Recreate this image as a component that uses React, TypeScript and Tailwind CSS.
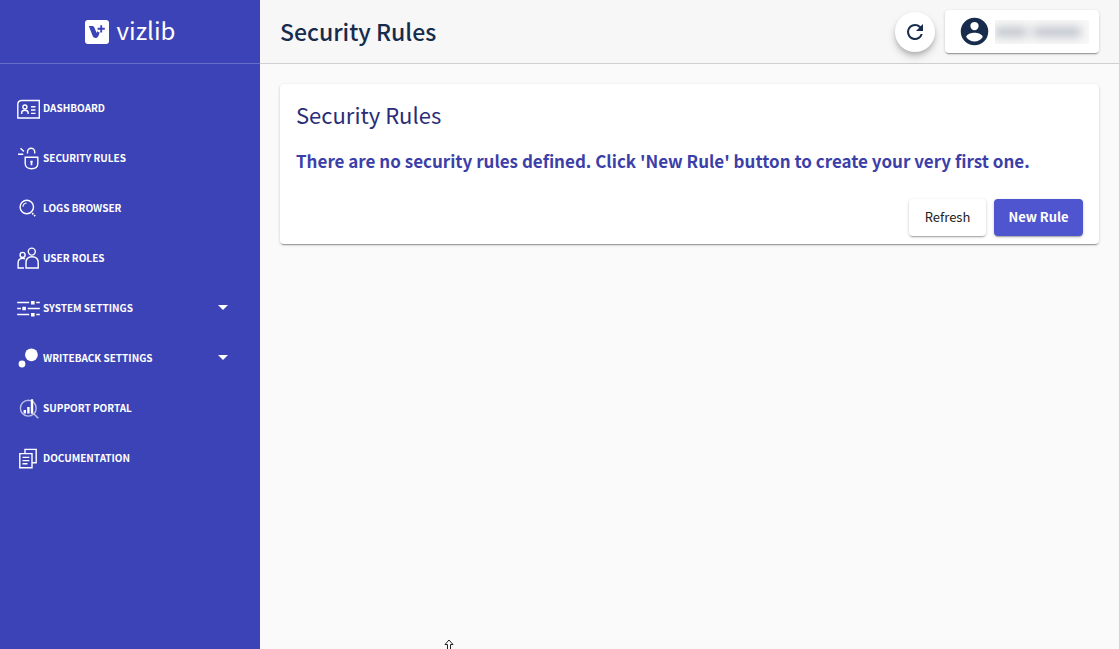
import React, { useState } from "react";

const iconProps = {
  width: 24,
  height: 24,
  viewBox: "0 0 24 24",
  fill: "none",
  stroke: "currentColor",
  strokeWidth: 1.4,
  className: "shrink-0",
  "aria-hidden": true,
};

const DashboardIcon = () => (
  <svg {...iconProps}>
    <path d="M5 4.5h17.3V22H.8V8.3Q.8 4.5 5 4.5z" />
    <circle cx="7.9" cy="11" r="2" />
    <path d="M4.7 18v-1.5q0-2.3 3.2-2.3t3.2 2.3V18M14 10.7h4.5M14 14h4.5M14 17.4h4.5" />
  </svg>
);

const SecurityIcon = () => (
  <svg {...iconProps}>
    <path d="M8.2 11.2h12.6v6.3c0 3-2.4 5.2-6.3 5.2s-6.3-2.2-6.3-5.2z" />
    <path d="M10.5 7.5V5.8a3.6 3.6 0 0 1 7.2 0v1.7M3.5 2.2l3.4 3.2M1 8.2h5.3" />
    <path d="M14.5 15.2v4M13.3 15.6h2.4" strokeWidth="1.7" />
  </svg>
);

const LogsIcon = () => (
  <svg {...iconProps}>
    <circle cx="9.8" cy="11" r="6.7" />
    <path d="M5.9 10.8A4.2 4.2 0 0 1 9.6 7" strokeWidth="1.1" />
    <path d="M15.2 17.2l3.4 3.3" strokeDasharray="1.6 1" strokeWidth="1.7" />
  </svg>
);

const UsersIcon = () => (
  <svg {...iconProps}>
    <circle cx="14.8" cy="5.6" r="3.5" />
    <path d="M9 22v-5.2c0-3.8 2.2-6 6-6s6.2 2.2 6.2 6V22z" />
    <circle cx="5.6" cy="8.9" r="2.5" />
    <path d="M7 22H1.1v-5c0-3 1.7-4.6 4.7-4.6q1.4 0 2.2.5" />
  </svg>
);

const SystemIcon = () => (
  <svg {...iconProps}>
    <path d="M.2 6.6h12M19.2 6.6h3.6M.2 12.5h3.7M10.7 12.5h12.1M.2 18.6h12M19.2 18.6h3.6" strokeWidth="1.5" />
    <path d="M14 4.9h3.6v3.6H14zM5.3 10.7h3.6v3.6H5.3zM14 16.9h3.6v3.6H14z" fill="currentColor" stroke="none" />
  </svg>
);

const WritebackIcon = () => (
  <svg {...iconProps} fill="currentColor" stroke="none">
    <circle cx="14.4" cy="8.8" r="6.4" />
    <circle cx="5" cy="18" r="3.4" />
  </svg>
);

const SupportIcon = () => (
  <svg {...iconProps}>
    <circle cx="11.3" cy="12.2" r="7.9" strokeOpacity=".65" />
    <path d="M17 18l4.3 4.2" strokeOpacity=".65" strokeWidth="1.6" />
    <path d="M7.8 14v3.5M11.4 11v6.5M15 3.3v14.5" strokeWidth="2.4" />
  </svg>
);

const DocsIcon = () => (
  <svg {...iconProps}>
    <path d="M8 7.5V3.4h11.2v13.4H15" />
    <path d="M2.8 7.6H15v14.1H2.8zM5.5 11.4h6.8M5.5 14.6h6.8M5.5 17.8h5" />
  </svg>
);

const menuItems = [
  { label: "DASHBOARD", icon: DashboardIcon },
  { label: "SECURITY RULES", icon: SecurityIcon },
  { label: "LOGS BROWSER", icon: LogsIcon },
  { label: "USER ROLES", icon: UsersIcon },
  { label: "SYSTEM SETTINGS", icon: SystemIcon, expandable: true },
  { label: "WRITEBACK SETTINGS", icon: WritebackIcon, expandable: true },
  { label: "SUPPORT PORTAL", icon: SupportIcon },
  { label: "DOCUMENTATION", icon: DocsIcon },
];

const itemClass = "flex h-[50px] w-full items-center gap-0.5 pl-[17px] pr-[25px] text-left text-white hover:bg-white/10";

const Sidebar = () => {
  const [openItem, setOpenItem] = useState("");

  return (
    <aside className="w-[260px] shrink-0 bg-[#3c43b7]">
      {/* Logo */}
      <div className="flex h-16 items-center justify-center gap-2 border-b border-[#686dc8] text-white">
        <svg width="24" height="24" viewBox="0 0 24 24" aria-hidden="true">
          <rect width="24" height="24" rx="3" fill="#fff" />
          <path d="M3.8 6h3.4q1.4 0 2 1.3l2.5 5.6.9-1.8q.6 1.2 2 1.4-.5 2-1.5 4-.8 1.6-2.6 1.6-1.9 0-2.7-1.8z" fill="#3c43b7" />
          <path d="M16.2 5.2v7.2M12.6 8.8h7.2" stroke="#3c43b7" strokeWidth="1.9" />
        </svg>
        <span className="pb-1 text-2xl leading-8">vizlib</span>
      </div>

      <nav className="pt-[19px]">
        <ul>
          {menuItems.map(({ label, icon: Icon, expandable }) => (
            <li key={label}>
              {expandable ? (
                <button
                  type="button"
                  className={itemClass}
                  aria-expanded={openItem === label}
                  onClick={() => setOpenItem(openItem === label ? "" : label)}
                >
                  <Icon />
                  <span className="text-[10px] font-bold leading-4">{label}</span>
                  <svg width="24" height="24" viewBox="0 0 24 24" className="ml-auto" fill="currentColor" aria-hidden="true">
                    <path d="M7 9h10l-5 5z" />
                  </svg>
                </button>
              ) : (
                <a href="#" className={itemClass}>
                  <Icon />
                  <span className="text-[10px] font-bold leading-4">{label}</span>
                </a>
              )}
            </li>
          ))}
        </ul>
      </nav>
    </aside>
  );
};

const Header = () => (
  <header className="flex h-16 items-center justify-between border-b border-[#cfcfd3] bg-[#f7f7f7] px-5">
    <h1 className="pb-0.5 text-[23px] font-medium leading-8 text-[#172b4d]">Security Rules</h1>
    <div className="flex items-center gap-2.5">
      <button
        type="button"
        aria-label="Reload"
        className="flex size-10 items-center justify-center rounded-full bg-white text-[#172b4d] shadow-[0_3px_5px_-1px_rgba(0,0,0,.2),0_5px_9px_rgba(0,0,0,.16)]"
      >
        <svg width="24" height="24" viewBox="0 0 24 24" fill="currentColor" aria-hidden="true">
          <path d="M17.65 6.35A7.96 7.96 0 0 0 12 4a8 8 0 1 0 7.73 10h-2.08A6 6 0 1 1 12 6c1.66 0 3.14.69 4.22 1.78L13 11h7V4z" />
        </svg>
      </button>
      <button
        type="button"
        aria-label="Account"
        className="flex h-[43px] w-[154px] items-center gap-1 rounded bg-white pl-[13px] pr-2.5 text-[#172b4d] shadow-[0_2px_1px_-1px_rgba(0,0,0,.3),0_1px_3px_rgba(0,0,0,.2)]"
      >
        <svg width="33" height="33" viewBox="0 0 24 24" fill="currentColor" className="shrink-0" aria-hidden="true">
          <path d="M12 2a10 10 0 1 0 0 20 10 10 0 0 0 0-20zm0 3a3 3 0 1 1 0 6 3 3 0 0 1 0-6zm0 14.2a7.2 7.2 0 0 1-6-3.22c.03-1.99 4-3.08 6-3.08s5.97 1.09 6 3.08a7.2 7.2 0 0 1-6 3.22z" />
        </svg>
        {/* Obscured user name */}
        <span className="flex h-6 flex-1 items-center gap-1.5 overflow-hidden bg-[#f8f8f8]">
          <span className="h-2.5 w-8 bg-gray-400/60 blur-[5px]" />
          <span className="h-2.5 w-12 bg-gray-400/60 blur-[5px]" />
        </span>
      </button>
    </div>
  </header>
);

const RulesCard = () => (
  <section className="rounded bg-white px-4 pb-2 pt-3.5 shadow-[0_2px_1px_-1px_rgba(0,0,0,.3),0_1px_3px_rgba(0,0,0,.2)]">
    <h2 className="text-[22px] leading-8 text-[#2a2d77]">Security Rules</h2>
    <p className="mt-[17px] text-[17px] font-bold leading-7 text-[#3c3fa8]">
      There are no security rules defined. Click 'New Rule' button to create your very first one.
    </p>
    <div className="mt-6 flex justify-end gap-2 text-[13px] leading-5">
      <button
        type="button"
        className="h-[37px] w-[77px] rounded bg-white pb-0.5 text-[#212121] shadow-[0_2px_1px_-1px_rgba(0,0,0,.2),0_1px_3px_rgba(0,0,0,.24)]"
      >
        Refresh
      </button>
      <button
        type="button"
        className="h-[37px] w-[89px] rounded bg-[#4f55cf] pb-0.5 font-bold text-white shadow-[0_2px_1px_-1px_rgba(0,0,0,.2),0_1px_3px_rgba(0,0,0,.24)]"
      >
        New Rule
      </button>
    </div>
  </section>
);

const App = () => {
  return (
    <div className="relative flex min-h-screen overflow-hidden bg-[#fafafa] font-['Noto_Sans_CJK_SC','Noto_Sans',sans-serif]">
      <Sidebar />
      <div className="min-w-0 flex-1">
        <Header />
        <main className="p-5">
          <RulesCard />
        </main>
      </div>

      {/* Scroll-up marker, partly below the fold */}
      <svg width="10" height="12" viewBox="0 0 10 12" className="absolute -bottom-0.5 left-[444px]" fill="#fff" stroke="#222" aria-hidden="true">
        <path d="M5 1L9 5.5H6.5V12h-3V5.5H1z" />
      </svg>
    </div>
  );
};

export default App;
